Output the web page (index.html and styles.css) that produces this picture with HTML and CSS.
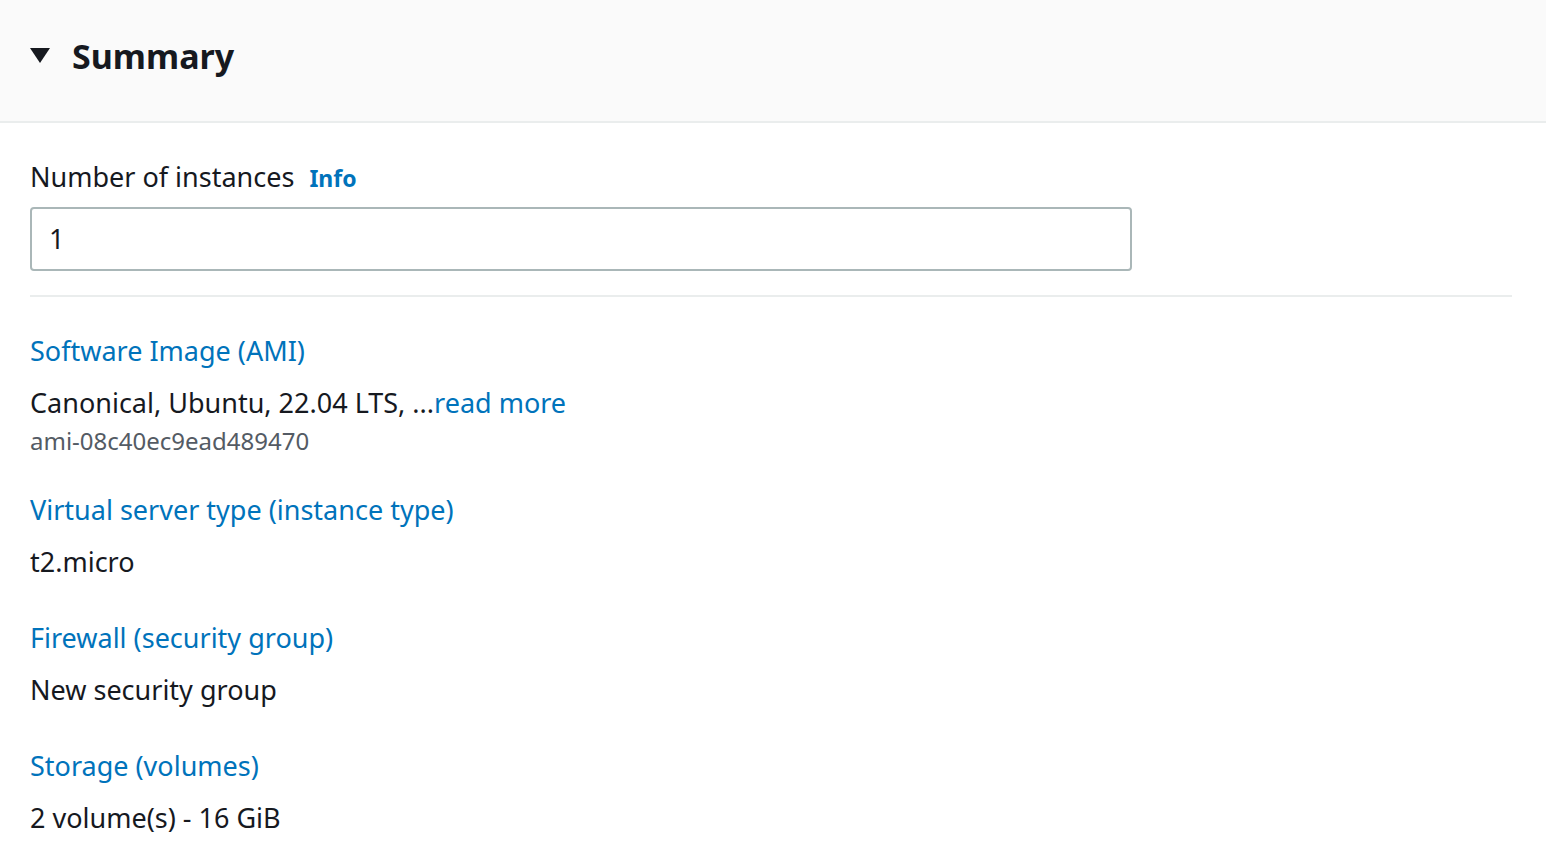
FILE: index.html
```html
<!DOCTYPE html>
<html>
<head>
<meta charset="utf-8">
<link rel="stylesheet" href="styles.css">
</head>
<body>
<div class="panel">
  <div class="panel-header">
    <svg class="caret" width="20" height="15" viewBox="0 0 20 15"><path d="M0 0 H20 L10 15 Z" fill="#16191f"/></svg>
    <h2 class="title">Summary</h2>
  </div>
  <div class="panel-body">
    <div class="field">
      <div class="field-label">Number of instances <a class="info">Info</a></div>
      <div class="input">1</div>
    </div>
    <div class="divider"></div>
    <div class="items">
      <div class="item">
        <a class="item-label">Software Image (AMI)</a>
        <div class="item-value">Canonical, Ubuntu, 22.04 LTS, ...<a class="more">read more</a></div>
        <div class="item-sub">ami-08c40ec9ead489470</div>
      </div>
      <div class="item">
        <a class="item-label">Virtual server type (instance type)</a>
        <div class="item-value">t2.micro</div>
      </div>
      <div class="item">
        <a class="item-label">Firewall (security group)</a>
        <div class="item-value">New security group</div>
      </div>
      <div class="item">
        <a class="item-label">Storage (volumes)</a>
        <div class="item-value">2 volume(s) - 16 GiB</div>
      </div>
    </div>
  </div>
</div>
</body>
</html>
```
FILE: styles.css
```css
html, body {
  margin: 0;
  padding: 0;
  background: #ffffff;
}
body {
  font-family: "Noto Sans", "Open Sans", sans-serif;
  color: #16191f;
  width: 1546px;
  height: 856px;
  overflow: hidden;
}
.panel-header {
  background: #fafafa;
  border-bottom: 2px solid #eaeded;
  display: flex;
  align-items: center;
  padding-left: 30px;
  box-sizing: border-box;
  height: 123px;
}
.caret {
  display: block;
  margin-right: 22px;
  margin-top: -10px;
}
.title {
  margin: 0;
  font-size: 34px;
  font-weight: 700;
  line-height: 44px;
  margin-top: -10px;
}
.panel-body {
  padding: 0 34px 0 30px;
}
.field {
  padding-top: 34px;
}
.field-label {
  font-size: 27px;
  line-height: 40px;
}
.info {
  color: #0073bb;
  font-weight: 700;
  font-size: 23px;
  margin-left: 8px;
}
.input {
  width: 1102px;
  height: 64px;
  box-sizing: border-box;
  border: 2px solid #aab7b8;
  border-radius: 4px;
  padding-left: 17px;
  font-size: 27px;
  line-height: 60px;
  margin-top: 9px;
}
.divider {
  height: 2px;
  background: #eaeded;
  margin-top: 24px;
}
.items {
  display: flex;
  flex-direction: column;
  gap: 36px;
  padding-top: 34px;
}
.item {
  display: flex;
  flex-direction: column;
}
.item-label {
  color: #0073bb;
  font-size: 27px;
  line-height: 40px;
}
.item-value {
  font-size: 27px;
  line-height: 40px;
  margin-top: 12px;
}
.more {
  color: #0073bb;
}
.item-sub {
  color: #545b64;
  font-size: 24px;
  line-height: 26px;
  margin-top: 5px;
}
```
